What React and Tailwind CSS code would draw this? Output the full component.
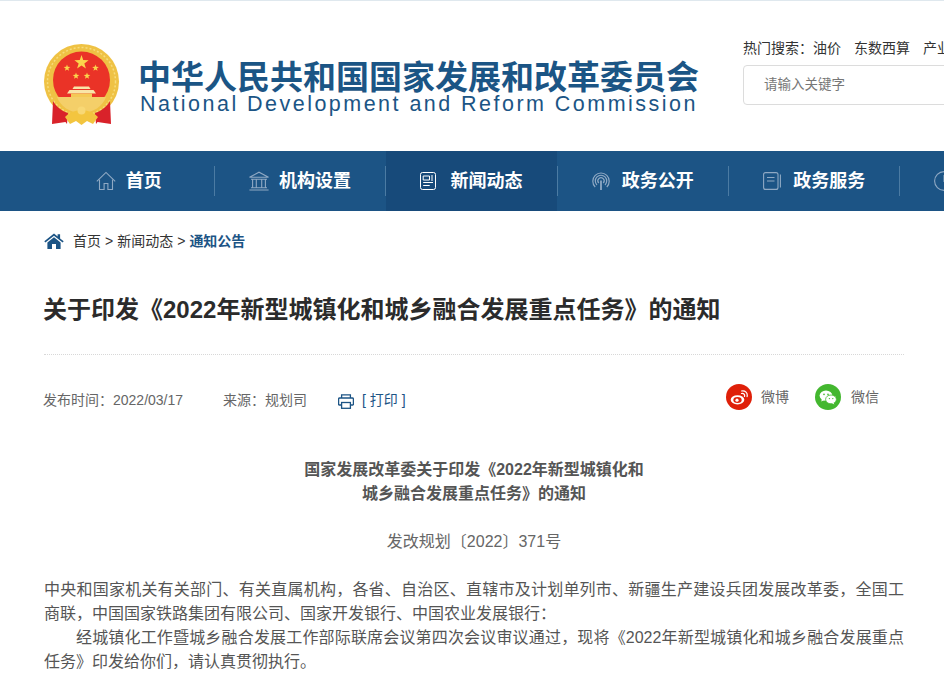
import React from 'react';

const FONT = '[font-family:"Liberation_Sans","Noto_Sans_CJK_SC",sans-serif]';

function Star({ x, y, r, fill = '#fbd44c' }) {
  const pts = [];
  for (let i = 0; i < 10; i++) {
    const rad = i % 2 === 0 ? r : r * 0.4;
    const a = (Math.PI / 5) * i - Math.PI / 2;
    pts.push(`${(x + rad * Math.cos(a)).toFixed(2)},${(y + rad * Math.sin(a)).toFixed(2)}`);
  }
  return <polygon points={pts.join(' ')} fill={fill} />;
}

// national emblem, simplified
function Emblem() {
  return (
    <svg width="76" height="82" viewBox="0 0 76 82" className="mt-[1px] ml-[1px] shrink-0">
      <circle cx="37.5" cy="37.5" r="37.5" fill="#efc244" />
      <circle cx="37.5" cy="37.5" r="34" fill="none" stroke="#f7dc7c" strokeWidth="1.5" strokeDasharray="2 2" />
      <circle cx="37.5" cy="36" r="28.5" fill="#ea3327" />
      <Star x={37.5} y={18.5} r={7.5} />
      <Star x={23} y={24} r={3.5} />
      <Star x={51.5} y={24} r={3.5} />
      <Star x={32} y={32} r={3.5} />
      <Star x={43} y={32} r={3.5} />
      {/* gate building */}
      <path d="M30 42.5h15l1.5 2.5h-18z" fill="#f9e5a8" />
      <path d="M25.5 46h24l2.5 3.5H23z" fill="#f9e5a8" />
      <rect x="27" y="49.5" width="21" height="3.5" fill="#f4c956" />
      <path d="M13 53h49c-3 9-13 16-24.5 16S16 62 13 53z" fill="#f4cf69" />
      {/* ribbons */}
      <path d="M9 57l-1 23 13.5-2 1.5 2 1-11c-6-2-11.5-6-15-12z" fill="#d9222a" />
      <path d="M66 57l1 23-13.5-2-1.5 2-1-11c6-2 11.5-6 15-12z" fill="#d9222a" />
      <path d="M21 73c5-5 11-7 16.5-7S49 68 54 73l-5 7-6-3-5.500 4-5.500-4-6 3z" fill="#f3c53f" />
      <circle cx="37.5" cy="66.5" r="4" fill="#f8d875" />
    </svg>
  );
}

const NAV_ITEMS = [
  {
    label: '首页',
    icon: (
      <svg width="20" height="20" viewBox="0 0 20 20" fill="none" stroke="#8fa9c4" strokeWidth="1.1">
        <path d="M0.8 10.4 10 1.4l9.2 9" />
        <path d="M3.5 8.5v10h4.6v-6h3.8v6h4.6v-10" />
      </svg>
    ),
    gap: 'gap-[10px]',
  },
  {
    label: '机构设置',
    icon: (
      <svg width="20" height="20" viewBox="0 0 20 20" fill="none" stroke="#8fa9c4" strokeWidth="1.1">
        <path d="M0.5 6.3 10 1.2l9.5 5.1z" />
        <path d="M2 8.2h16M3.6 8.5v8M7.3 8.5v8M12.7 8.5v8M16.4 8.5v8M2 16.8h16M0.4 19h19.2" />
      </svg>
    ),
    gap: 'gap-[10px]',
  },
  {
    label: '新闻动态',
    active: true,
    icon: (
      <svg width="16" height="18" viewBox="0 0 16 18" fill="none" stroke="#ffffff" strokeWidth="1">
        <rect x="0.5" y="0.5" width="15" height="17" rx="2" />
        <path d="M3.2 4h6.3v4H3.2zM11 4h2M11 6h2M11 8h2M3.2 10.5h9.8M3.2 13.5h6.5" />
      </svg>
    ),
    gap: 'gap-[14px]',
  },
  {
    label: '政务公开',
    icon: (
      <svg width="18" height="18" viewBox="0 0 18 18" fill="none" stroke="#8fa9c4" strokeWidth="1.2">
        <path d="M3.2 15A8.2 8.2 0 1 1 14.8 15" />
        <path d="M5 13a5.7 5.7 0 1 1 8 0" />
        <path d="M6.8 11a3.1 3.1 0 1 1 4.4 0" />
        <path d="M9 8.5V18" strokeWidth="1.8" />
      </svg>
    ),
    gap: 'gap-[12px]',
  },
  {
    label: '政务服务',
    icon: (
      <svg width="18" height="18" viewBox="0 0 18 18" fill="none" stroke="#8fa9c4" strokeWidth="1.1">
        <rect x="0.6" y="0.6" width="14.4" height="16.8" rx="2" />
        <path d="M4 5.5h7.5M4 9h7.5M17.4 2.5v13" />
      </svg>
    ),
    gap: 'gap-[12px]',
  },
];

const BODY_1 =
  '中央和国家机关有关部门、有关直属机构，各省、自治区、直辖市及计划单列市、新疆生产建设兵团发展改革委，全国工商联，中国国家铁路集团有限公司、国家开发银行、中国农业发展银行：';
const BODY_2 =
  '经城镇化工作暨城乡融合发展工作部际联席会议第四次会议审议通过，现将《2022年新型城镇化和城乡融合发展重点任务》印发给你们，请认真贯彻执行。';

function NavSep() {
  return <div className="-mx-[0.5px] mt-[15px] h-[30px] w-px shrink-0 bg-[#4b7ba3]" />;
}

export default function App() {
  return (
    <div className={`h-[690px] w-[944px] overflow-hidden bg-white ${FONT}`}>
      <header className="flex h-[151px] w-[1100px] border-t border-[#dfe8ee] pl-[43px]">
        <div className="flex w-[700px] pt-[42px]">
          <Emblem />
          <div className="ml-[18px] pt-[23px]">
            <div className="text-[33px] leading-[24px] font-bold whitespace-nowrap text-[#1b5585]">
              中华人民共和国国家发展和改革委员会
            </div>
            <div className="mt-[2px] ml-[2px] text-[21.5px] leading-[24px] tracking-[2.47px] whitespace-nowrap text-[#1b5585]">
              National Development and Reform Commission
            </div>
          </div>
        </div>
        <div className="pt-[38px]">
          <div className="flex text-[14px] leading-[18px] whitespace-nowrap text-[#333]">
            <span>热门搜索：</span>
            <span>油价</span>
            <span className="ml-[13px]">东数西算</span>
            <span className="ml-[13px]">产业</span>
          </div>
          <div className="mt-[8px] flex h-[40px] w-[300px] items-center rounded-[4px] border border-[#dcdcdc] pl-[20px] text-[13.5px] text-[#777]">
            请输入关键字
          </div>
        </div>
      </header>

      <nav className="flex h-[60px] w-[1100px] bg-[#1c5485] pl-[43px]">
        {NAV_ITEMS.map((item, i) => (
          <React.Fragment key={item.label}>
            {i > 0 && <NavSep />}
            <div
              className={`flex h-full w-[171.4px] shrink-0 items-center justify-center ${item.gap} ${
                item.active ? 'bg-[#174a7a]' : ''
              }`}
            >
              {item.icon}
              <span className="pt-[1px] text-[18px] font-bold text-white">{item.label}</span>
            </div>
          </React.Fragment>
        ))}
        <NavSep />
        <svg width="20" height="20" viewBox="0 0 20 20" fill="none" stroke="#8fa9c4" strokeWidth="1.1" className="mt-[20px] ml-[34px] shrink-0">
          <circle cx="10" cy="10" r="9.4" />
          <path d="M10 4v6.5h5" />
        </svg>
      </nav>

      <main className="pr-[40px] pl-[44px]">
        <div className="flex h-[60px] items-center text-[14px] text-[#333]">
          <svg width="20" height="16" viewBox="0 0 20 16" className="mr-[9px] shrink-0">
            <path d="M10 0.5 0.3 8.3l1.1 1.3L10 2.8l8.6 6.8 1.1-1.3-3.6-2.9V1.3h-2.5v2.1z" fill="#1c5485" />
            <path d="M3.4 9.4 10 4.2l6.6 5.2V16h-4.6v-5H8v5H3.4z" fill="#1c5485" />
          </svg>
          <span>首页</span>
          <span className="mx-[4px]">&gt;</span>
          <span>新闻动态</span>
          <span className="mx-[4px]">&gt;</span>
          <span className="font-bold text-[#1c5485]">通知公告</span>
        </div>

        <h1 className="mt-[21px] -ml-[1px] text-[24px] leading-[36px] font-bold whitespace-nowrap text-[#2b2b2b]">
          关于印发《2022年新型城镇化和城乡融合发展重点任务》的通知
        </h1>
        <div className="mt-[26px] border-t border-dotted border-[#d8d8d8]" />

        <div className="mt-[25px] -ml-[1px] flex h-[40px] items-center text-[14px] text-[#666]">
          <span>发布时间：2022/03/17</span>
          <span className="ml-[40px]">来源：规划司</span>
          <svg width="16" height="15" viewBox="0 0 16 15" fill="none" stroke="#1c5485" strokeWidth="1.3" className="mt-[2px] ml-[31px]">
            <path d="M3.6 4V0.8h8.8V4" />
            <path d="M3.4 11H1.2c-.4 0-.6-.3-.6-.6V5c0-.6.4-1 1-1h12.8c.6 0 1 .4 1 1v5.4c0 .3-.2.6-.6.6h-2.2" />
            <rect x="3.6" y="8.5" width="8.8" height="5.8" />
          </svg>
          <span className="ml-[8px] text-[#1c5485]">[ 打印 ]</span>
          <div className="-mt-[6px] ml-auto flex items-center pr-[25px]">
            <span className="flex h-[26px] w-[26px] items-center justify-center rounded-full bg-[#df2009]">
              <svg width="18" height="15" viewBox="0 0 18 15" fill="none">
                <ellipse cx="7.5" cy="9.8" rx="6.8" ry="4.6" fill="#fff" />
                <ellipse cx="7.5" cy="10" rx="4.2" ry="3" fill="#df2009" />
                <circle cx="7" cy="10.2" r="1.6" fill="#fff" />
                <path d="M11.5 3.5c2-.6 3.6 1 3 3M11.5 1c3.8-.8 6.4 2 5.6 5.6" stroke="#fff" strokeWidth="1.2" strokeLinecap="round" />
              </svg>
            </span>
            <span className="ml-[9px]">微博</span>
            <span className="ml-[26px] flex h-[26px] w-[26px] items-center justify-center rounded-full bg-[#43b72f]">
              <svg width="18" height="15" viewBox="0 0 18 15">
                <ellipse cx="7" cy="5.6" rx="6.4" ry="5.2" fill="#fff" />
                <path d="M3 9l-.8 2.6L5.4 10z" fill="#fff" />
                <ellipse cx="12" cy="9.4" rx="5.4" ry="4.4" fill="#fff" stroke="#43b72f" strokeWidth="0.8" />
                <path d="M14.5 12.5l.8 2-2.6-1.4z" fill="#fff" />
                <circle cx="5" cy="4.4" r="0.8" fill="#43b72f" />
                <circle cx="9" cy="4.4" r="0.8" fill="#43b72f" />
                <circle cx="10.4" cy="8.6" r="0.7" fill="#43b72f" />
                <circle cx="13.8" cy="8.6" r="0.7" fill="#43b72f" />
              </svg>
            </span>
            <span className="ml-[10px]">微信</span>
          </div>
        </div>

        <div className="mt-[38px] text-center text-[16px] leading-[24px] font-bold text-[#555]">
          <p>国家发展改革委关于印发《2022年新型城镇化和</p>
          <p>城乡融合发展重点任务》的通知</p>
        </div>
        <p className="mt-[24px] text-center text-[16px] leading-[24px] text-[#666]">发改规划〔2022〕371号</p>
        <p className="mt-[24px] text-justify text-[16px] leading-[24px] text-[#555]">{BODY_1}</p>
        <p className="indent-[32px] text-justify text-[16px] leading-[24px] text-[#555]">{BODY_2}</p>
      </main>
    </div>
  );
}
